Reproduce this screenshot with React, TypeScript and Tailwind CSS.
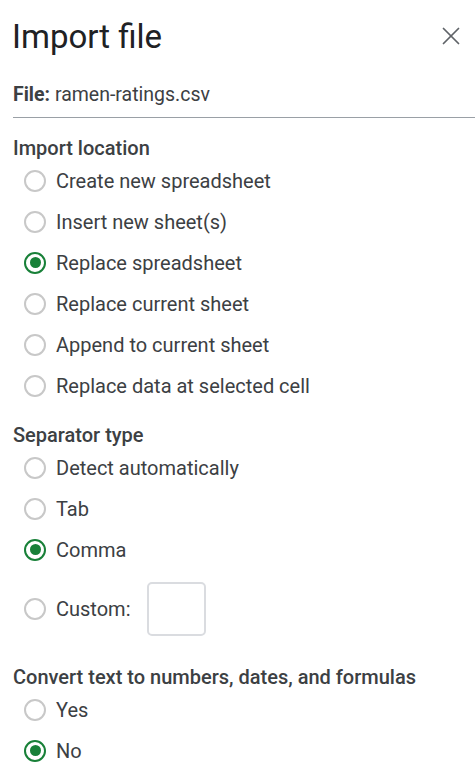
import { X } from 'lucide-react'

type Option = { label: string; checked?: boolean }

const locations: Option[] = [
  { label: 'Create new spreadsheet' },
  { label: 'Insert new sheet(s)' },
  { label: 'Replace spreadsheet', checked: true },
  { label: 'Replace current sheet' },
  { label: 'Append to current sheet' },
  { label: 'Replace data at selected cell' },
]

const separators: Option[] = [
  { label: 'Detect automatically' },
  { label: 'Tab' },
  { label: 'Comma', checked: true },
]

const convert: Option[] = [{ label: 'Yes' }, { label: 'No', checked: true }]

function Radio({ checked }: { checked?: boolean }) {
  if (checked) {
    return (
      <span className="w-[22px] h-[22px] rounded-full border-[2.5px] border-[#188038] flex items-center justify-center shrink-0">
        <span className="w-[11px] h-[11px] rounded-full bg-[#188038]" />
      </span>
    )
  }
  return <span className="w-[22px] h-[22px] rounded-full border-2 border-[#c8c8c8] shrink-0" />
}

function Row({ label, checked }: Option) {
  return (
    <div className="h-[41px] flex items-center pl-[24px] gap-[10px]">
      <Radio checked={checked} />
      <span className="text-[20px] text-[#3c4043] leading-none">{label}</span>
    </div>
  )
}

function Heading({ children }: { children: string }) {
  return <div className="h-[24px] flex items-center text-[20px] font-medium text-[#3c4043] pl-[13px]">{children}</div>
}

export default function App() {
  return (
    <div className="w-[475px] h-[773px] bg-white overflow-hidden" style={{ fontFamily: 'Roboto, Arial, sans-serif' }}>
      <div className="h-[72px] flex items-center justify-between pl-[12px] pr-[9px]">
        <h1 className="text-[33px] text-[#202124] font-normal leading-none">Import file</h1>
        <X size={30} strokeWidth={1.4} className="text-[#5f6368]" />
      </div>

      <div className="ml-[13px] pt-[12px] pb-[11px] border-b border-[#9aa0a6] text-[19.5px] leading-[22px] text-[#3c4043]">
        <span className="font-bold">File:</span> ramen-ratings.csv
      </div>

      <div className="mt-[18px]">
        <Heading>Import location</Heading>
        {locations.map(o => (
          <Row key={o.label} {...o} />
        ))}
      </div>

      <div className="mt-[17px]">
        <Heading>Separator type</Heading>
        {separators.map(o => (
          <Row key={o.label} {...o} />
        ))}
        <div className="h-[78px] flex items-center pl-[24px] gap-[10px]">
          <Radio />
          <span className="text-[20px] text-[#3c4043] leading-none">Custom:</span>
          <input className="ml-[6px] w-[59px] h-[54px] border-2 border-[#dadce0] rounded-[5px] outline-none" />
        </div>
      </div>

      <div className="mt-[17px]">
        <Heading>Convert text to numbers, dates, and formulas</Heading>
        {convert.map(o => (
          <Row key={o.label} {...o} />
        ))}
      </div>
    </div>
  )
}
